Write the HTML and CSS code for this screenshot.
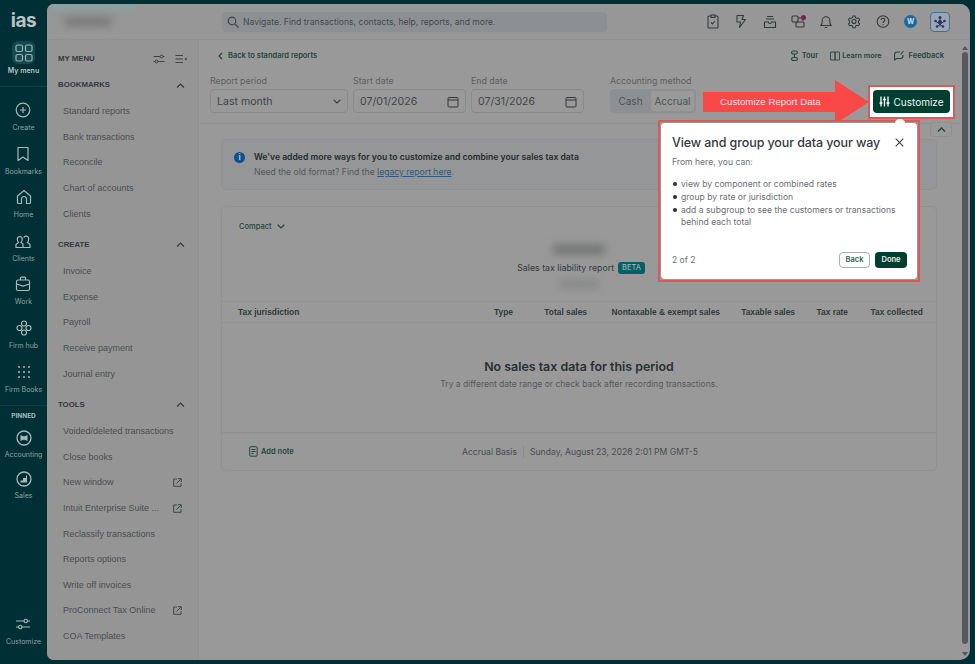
FILE: index.html
```html
<!DOCTYPE html>
<html lang="en">
<head>
    <meta charset="UTF-8">
    <meta name="viewport" content="width=device-width, initial-scale=1.0">
    <title>Sales tax liability report</title>
    <link rel="stylesheet" href="styles.css">
</head>
<body>
<div class="app">
    <nav class="rail">
        <div class="logo">ias</div>
        <div class="rail-top">
            <div class="tile"><svg width="18" height="18" viewBox="0 0 18 18" fill="none" stroke="#9fb0b1" stroke-width="1.2"><rect x="1" y="1" width="6.5" height="6.5" rx="1.5"/><rect x="10.5" y="1" width="6.5" height="6.5" rx="1.5"/><rect x="1" y="10.5" width="6.5" height="6.5" rx="1.5"/><rect x="10.5" y="10.5" width="6.5" height="6.5" rx="1.5"/></svg></div>
            <div class="rail-label strong">My menu</div>
        </div>
        <div class="rail-item"><svg width="16" height="16" viewBox="0 0 16 16" fill="none" stroke="#a9b8b9" stroke-width="1.2"><circle cx="8" cy="8" r="6.8"/><path d="M8 5v6M5 8h6"/></svg><span class="rail-label">Create</span></div>
        <div class="rail-item"><svg width="16" height="16" viewBox="0 0 16 16" fill="none" stroke="#a9b8b9" stroke-width="1.2"><path d="M3 1.500h10v13l-5-3.500-5 3.500z" stroke-linejoin="round"/></svg><span class="rail-label">Bookmarks</span></div>
        <div class="rail-item"><svg width="16" height="16" viewBox="0 0 16 16" fill="none" stroke="#a9b8b9" stroke-width="1.2"><path d="M1.500 7 8 1.500 14.500 7v6.500a1 1 0 0 1-1 1h-3V10a2.500 2.500 0 0 0-5 0v4.500h-3a1 1 0 0 1-1-1z" stroke-linejoin="round"/></svg><span class="rail-label">Home</span></div>
        <div class="rail-item"><svg width="16" height="16" viewBox="0 0 16 16" fill="none" stroke="#a9b8b9" stroke-width="1.2"><path d="M1 14.500v-3l2.500-2c-1-1-1.200-2-1.200-4a2.600 2.600 0 0 1 5 0c0 2-.2 3-1.300 4L8 11v3.500zM8 14.500h7v-3l-2.500-2c1-1 1.200-2 1.200-4a2.600 2.600 0 0 0-4.900-1"/></svg><span class="rail-label">Clients</span></div>
        <div class="rail-item"><svg width="16" height="16" viewBox="0 0 16 16" fill="none" stroke="#a9b8b9" stroke-width="1.2"><rect x="1.500" y="4" width="13" height="10.500" rx="1.500"/><path d="M5.500 4V2a.8.8 0 0 1 .8-.8h3.400a.8.8 0 0 1 .8.8v2M1.500 8 8 10l6.500-2"/></svg><span class="rail-label">Work</span></div>
        <div class="rail-item"><svg width="16" height="16" viewBox="0 0 16 16" fill="none" stroke="#a9b8b9" stroke-width="1.2"><circle cx="8" cy="3.500" r="2.500"/><circle cx="8" cy="12.500" r="2.500"/><circle cx="3.500" cy="8" r="2.500"/><circle cx="12.500" cy="8" r="2.500"/></svg><span class="rail-label">Firm hub</span></div>
        <div class="rail-item"><svg width="16" height="16" viewBox="0 0 16 16" fill="#a9b8b9"><circle cx="3" cy="3" r="1"/><circle cx="8" cy="3" r="1"/><circle cx="13" cy="3" r="1"/><circle cx="3" cy="8" r="1"/><circle cx="8" cy="8" r="1"/><circle cx="13" cy="8" r="1"/><circle cx="3" cy="13" r="1"/><circle cx="8" cy="13" r="1"/><circle cx="13" cy="13" r="1"/></svg><span class="rail-label">Firm Books</span></div>
        <div class="pinned">PINNED</div>
        <div class="rail-item pin"><svg width="16" height="16" viewBox="0 0 16 16"><circle cx="8" cy="8" r="7" fill="none" stroke="#a9b8b9" stroke-width="1.300"/><path d="M4.500 5 8 6.500 11.500 5v6L8 9.500 4.500 11z" fill="#a9b8b9"/></svg><span class="rail-label">Accounting</span></div>
        <div class="rail-item pin"><svg width="16" height="16" viewBox="0 0 16 16"><circle cx="8" cy="8" r="7" fill="none" stroke="#a9b8b9" stroke-width="1.300"/><path d="M4.500 11.500v-2h2.500V7h3V4.500h1v7z" fill="#a9b8b9"/></svg><span class="rail-label">Sales</span></div>
        <div class="rail-item rail-bottom"><svg width="16" height="16" viewBox="0 0 16 16" fill="none" stroke="#a9b8b9" stroke-width="1.100"><path d="M1 5h8M12.500 5H15M1 11h2.500M7 11h8"/><circle cx="10.700" cy="5" r="1.700"/><circle cx="5.200" cy="11" r="1.700"/></svg><span class="rail-label">Customize</span></div>
    </nav>

    <div class="main">
        <header class="topbar">
            <div class="company-tab"></div>
            <div class="company"></div>
            <div class="search">
                <svg width="12" height="12" viewBox="0 0 12 12" fill="none" stroke="#3f4547" stroke-width="1.200"><circle cx="5" cy="5" r="3.800"/><path d="m8 8 3.500 3.500"/></svg>
                <span>Navigate. Find transactions, contacts, help, reports, and more.</span>
            </div>
            <div class="top-icons">
                <svg width="14" height="15" viewBox="0 0 14 15" fill="none" stroke="#33393b" stroke-width="1.100"><rect x="2" y="2" width="10" height="12" rx="1"/><rect x="5" y="1" width="4" height="2.400" fill="#999"/><path d="m5 8.500 1.500 1.500L9 7"/></svg>
                <svg width="14" height="15" viewBox="0 0 14 15" fill="none" stroke="#33393b" stroke-width="1.100"><path d="M3 1.500h6.500L8 5.500h3.500L5.500 13.500l1-5.500H3z" stroke-linejoin="round"/></svg>
                <svg width="14" height="15" viewBox="0 0 14 15" fill="none" stroke="#33393b" stroke-width="1.100"><path d="M1.500 8v5.500h11V8h-4a1.500 1.500 0 0 1-3 0zM3 5h8M4 2.500h6"/></svg>
                <span class="msg-icon"><svg width="14" height="15" viewBox="0 0 14 15" fill="none" stroke="#33393b" stroke-width="1.100"><rect x="1" y="2" width="6" height="6" rx="1"/><rect x="5" y="8" width="8" height="5" rx="1"/><path d="M7 4h5v3"/></svg><i class="msg-dot"></i></span>
                <svg width="14" height="15" viewBox="0 0 14 15" fill="none" stroke="#33393b" stroke-width="1.100"><path d="M2 11.500c1-1 1.200-2 1.200-5a3.800 3.800 0 0 1 7.600 0c0 3 .2 4 1.200 5zM5.800 13.500h2.400"/></svg>
                <svg width="14" height="15" viewBox="0 0 14 15" fill="none" stroke="#33393b" stroke-width="1.100"><circle cx="7" cy="7.500" r="2"/><path d="m5.800 1.500h2.400l.4 1.800 1.600.9 1.800-.5 1.100 2-1.300 1.300v1.800l1.300 1.300-1.100 2-1.800-.5-1.600.9-.4 1.800H5.800l-.4-1.800-1.600-.9-1.800.5-1.100-2 1.300-1.300V7l-1.300-1.300 1.100-2 1.800.5 1.600-.9z" transform="translate(.6 .6) scale(.92)"/></svg>
                <svg width="14" height="15" viewBox="0 0 14 15" fill="none" stroke="#33393b" stroke-width="1.100"><circle cx="7" cy="7.500" r="5.800"/><path d="M5.200 6a1.800 1.800 0 1 1 2.800 1.500c-.7.400-1 .8-1 1.500M7 10.300v.9"/></svg>
                <span class="avatar">W</span>
                <span class="assist"><svg width="14" height="14" viewBox="0 0 14 14" fill="#27356f"><circle cx="7" cy="2.500" r="1.500"/><circle cx="2.500" cy="6" r="1.300"/><circle cx="11.500" cy="6" r="1.300"/><circle cx="4" cy="11.500" r="1.300"/><circle cx="10" cy="11.500" r="1.300"/><circle cx="7" cy="7" r="2"/><path d="M7 2.500v9M2.500 6 10 11.500M11.500 6 4 11.500" stroke="#27356f"/></svg></span>
            </div>
        </header>

        <div class="body">
            <aside class="menu">
                <div class="menu-head">
                    <span>MY MENU</span>
                    <span class="menu-tools">
                        <svg width="12" height="12" viewBox="0 0 12 12" fill="none" stroke="#33393b" stroke-width=".9"><path d="M.5 3.500h6.500M10 3.500h1.500M.5 8.500H2M5 8.500h6.500"/><circle cx="8.500" cy="3.500" r="1.400"/><circle cx="3.500" cy="8.500" r="1.400"/></svg>
                        <svg width="12" height="12" viewBox="0 0 12 12" fill="none" stroke="#33393b" stroke-width=".9"><path d="M.5 2.500h7.500M.5 6h7.500M.5 9.500h7.500"/><path d="M11.500 4.500 9.500 6l2 1.500z" fill="#33393b" stroke="none"/></svg>
                    </span>
                </div>
                <div class="menu-section">BOOKMARKS <svg width="9" height="5" viewBox="0 0 9 5" fill="none" stroke="#33393b" stroke-width="1.200"><path d="m1 4.500 3.500-3.500 3.500 3.500"/></svg></div>
                <a class="menu-item">Standard reports</a>
                <a class="menu-item">Bank transactions</a>
                <a class="menu-item">Reconcile</a>
                <a class="menu-item">Chart of accounts</a>
                <a class="menu-item">Clients</a>
                <div class="menu-section">CREATE <svg width="9" height="5" viewBox="0 0 9 5" fill="none" stroke="#33393b" stroke-width="1.200"><path d="m1 4.500 3.500-3.500 3.500 3.500"/></svg></div>
                <a class="menu-item">Invoice</a>
                <a class="menu-item">Expense</a>
                <a class="menu-item">Payroll</a>
                <a class="menu-item">Receive payment</a>
                <a class="menu-item">Journal entry</a>
                <div class="menu-section">TOOLS <svg width="9" height="5" viewBox="0 0 9 5" fill="none" stroke="#33393b" stroke-width="1.200"><path d="m1 4.500 3.500-3.500 3.500 3.500"/></svg></div>
                <a class="menu-item">Voided/deleted transactions</a>
                <a class="menu-item">Close books</a>
                <a class="menu-item">New window <svg class="ext" width="9" height="9" viewBox="0 0 9 9" fill="none" stroke="#3f4547"><path d="M4 1H.7v7.300H8V5M3.500 5.500 8 1M5 .7h3.300V4"/></svg></a>
                <a class="menu-item">Intuit Enterprise Suite ... <svg class="ext" width="9" height="9" viewBox="0 0 9 9" fill="none" stroke="#3f4547"><path d="M4 1H.7v7.300H8V5M3.500 5.500 8 1M5 .7h3.300V4"/></svg></a>
                <a class="menu-item">Reclassify transactions</a>
                <a class="menu-item">Reports options</a>
                <a class="menu-item">Write off invoices</a>
                <a class="menu-item">ProConnect Tax Online <svg class="ext" width="9" height="9" viewBox="0 0 9 9" fill="none" stroke="#3f4547"><path d="M4 1H.7v7.300H8V5M3.500 5.500 8 1M5 .7h3.300V4"/></svg></a>
                <a class="menu-item">COA Templates</a>
            </aside>

            <main class="content">
                <div class="report-head">
                    <div class="links">
                        <a class="back"><svg width="5" height="8" viewBox="0 0 5 8" fill="none" stroke="#24453f" stroke-width="1.200"><path d="M4 1 1 4l3 3"/></svg> Back to standard reports</a>
                        <div class="link-right">
                            <a class="tour"><svg width="7" height="12" viewBox="0 0 7 12" fill="none" stroke="#24453f" stroke-width="1.100"><rect x=".6" y="1" width="5.800" height="3" rx="1.500"/><rect x=".6" y="7.500" width="5.800" height="3" rx="1.500"/><path d="M3.500 4v3.500"/></svg> Tour</a>
                            <a class="learn"><svg width="10" height="10" viewBox="0 0 10 10" fill="none" stroke="#24453f" stroke-width=".9"><path d="M.5 1h4.500v8H.5zM5 1h4.500v8H5z"/></svg> Learn more</a>
                            <a><svg width="10" height="11" viewBox="0 0 10 11" fill="none" stroke="#24453f" stroke-width="1.100"><path d="M6 2H3A2.500 2.500 0 0 0 .6 4.500V10l2-1.500h4A2.500 2.500 0 0 0 9 6V5M6.500 4.500l3-3.500"/></svg> Feedback</a>
                        </div>
                    </div>
                    <div class="filters">
                        <label class="field period">Report period
                            <span class="control">Last month <svg width="8" height="5" viewBox="0 0 8 5" fill="none" stroke="#33393b" stroke-width="1.100"><path d="m.7.800 3.300 3.200L7.300.8"/></svg></span>
                        </label>
                        <label class="field date">Start date
                            <span class="control">07/01/2026 <svg width="12" height="12" viewBox="0 0 12 12" fill="none" stroke="#33393b"><rect x="1" y="1.500" width="10" height="9.500" rx="1"/><path d="M1 4h10"/></svg></span>
                        </label>
                        <label class="field date">End date
                            <span class="control">07/31/2026 <svg width="12" height="12" viewBox="0 0 12 12" fill="none" stroke="#33393b"><rect x="1" y="1.500" width="10" height="9.500" rx="1"/><path d="M1 4h10"/></svg></span>
                        </label>
                        <div class="field method">Accounting method
                            <span class="segment"><span class="seg">Cash</span><span class="seg on">Accrual</span></span>
                        </div>
                    </div>
                </div>

                <div class="report-body">
                    <section class="alert">
                        <span class="info">i</span>
                        <div>
                            <p class="alert-title">We've added more ways for you to customize and combine your sales tax data</p>
                            <p class="alert-text">Need the old format? Find the <a class="legacy">legacy report here</a>.</p>
                        </div>
                    </section>

                    <section class="card">
                        <div class="compact">Compact <svg width="8" height="5" viewBox="0 0 8 5" fill="none" stroke="#24453f" stroke-width="1.200"><path d="m.7.800 3.300 3.200L7.300.8"/></svg></div>
                        <div class="report-title">
                            <div class="blur-name"></div>
                            <div class="title-line">Sales tax liability report <span class="beta">BETA</span></div>
                            <div class="blur-date"></div>
                        </div>
                        <div class="table-head">
                            <span>Tax jurisdiction</span>
                            <span>Type</span>
                            <span>Total sales</span>
                            <span>Nontaxable &amp; exempt sales</span>
                            <span>Taxable sales</span>
                            <span>Tax rate</span>
                            <span>Tax collected</span>
                        </div>
                        <div class="empty">
                            <h2>No sales tax data for this period</h2>
                            <p>Try a different date range or check back after recording transactions.</p>
                        </div>
                        <footer class="card-foot">
                            <a class="note"><svg width="9" height="11" viewBox="0 0 9 11" fill="none" stroke="#24453f"><rect x=".7" y=".7" width="7.500" height="9.500" rx="1"/><path d="M2.500 3.500h4M2.500 5.500h4M2.500 7.500h2"/></svg> Add note</a>
                            <span class="foot-text"><span class="basis">Accrual Basis</span><span>Sunday, August 23, 2026 2:01 PM GMT-5</span></span>
                        </footer>
                    </section>
                </div>
            </main>

            <div class="scrollbar">
                <i class="arrow-up"></i>
                <div class="thumb"></div>
                <i class="arrow-down"></i>
            </div>
        </div>
    </div>
</div>

<!-- things laid over the dimmed page -->
<button class="collapse"><svg width="9" height="5" viewBox="0 0 9 5" fill="none" stroke="#24453f" stroke-width="1.300"><path d="m1 4.500 3.500-3.500 3.500 3.500"/></svg></button>
<div class="callout">
    <svg width="166" height="44" viewBox="0 0 166 44"><path d="M0 12h132V0l34 22-34 22V32H0z" fill="#f94848"/></svg>
    <span>Customize Report Data</span>
</div>
<div class="customize-frame">
    <button class="customize"><svg width="11" height="11" viewBox="0 0 11 11" fill="none" stroke="#fff" stroke-width="1.300"><path d="M2 .5v10M5.500.5v10M9 .5v10"/><path d="M.5 7h3M4 3.500h3M7.500 7h3"/></svg> Customize</button>
</div>
<div class="popover-frame">
    <div class="popover">
        <div class="pop-head">
            <h3>View and group your data your way</h3>
            <svg width="9" height="9" viewBox="0 0 9 9" fill="none" stroke="#3b4143" stroke-width="1.100"><path d="m.7.700 7.600 7.600M8.300.7.700 8.300"/></svg>
        </div>
        <p class="pop-intro">From here, you can:</p>
        <ul class="pop-list">
            <li>view by component or combined rates</li>
            <li>group by rate or jurisdiction</li>
            <li>add a subgroup to see the customers or transactions behind each total</li>
        </ul>
        <div class="pop-foot">
            <span>2 of 2</span>
            <span class="pop-btns"><button class="btn-back">Back</button><button class="btn-done">Done</button></span>
        </div>
    </div>
</div>
</body>
</html>
```

FILE: styles.css
```css
* {
    box-sizing: border-box;
}
html, body {
    margin: 0;
    height: 100%;
    overflow: hidden;
}
body {
    background-color: #012f36;
    color: #3b4143;
    font-family: "Open Sans", sans-serif;
    position: relative;
}
p, h2, h3, ul {
    margin: 0;
}
button {
    font-family: inherit;
    cursor: pointer;
}
svg {
    display: block;
    flex: none;
}
.app {
    display: flex;
    height: 664px;
    padding: 4px 5px 4px 0;
}

/* left rail */
.rail {
    width: 47px;
    flex: none;
    display: flex;
    flex-direction: column;
    align-items: center;
    margin-top: -4px;
    margin-bottom: -4px;
    padding-bottom: 18px;
    color: #a9b8b9;
}
.logo {
    margin-top: 9px;
    height: 23px;
    font: bold 19px/23px "Inter", sans-serif;
    letter-spacing: -.5px;
    color: #b8c4c5;
}
.rail-top {
    margin-top: 9px;
    margin-bottom: 9px;
    width: 100%;
    height: 46px;
    border-bottom: 1px solid #0d3e44;
    display: flex;
    flex-direction: column;
    align-items: center;
    flex: none;
}
.tile {
    width: 23px;
    height: 23px;
    border-radius: 6px;
    background-color: #124a50;
    display: flex;
    align-items: center;
    justify-content: center;
}
.rail-label {
    font: 7px/10px "Inter", sans-serif;
    white-space: nowrap;
    color: #8fa2a3;
}
.rail-label.strong {
    margin-top: 2px;
    font-weight: 600;
    color: #b8c4c5;
}
.rail-item {
    height: 43.600px;
    padding-top: 6px;
    display: flex;
    flex-direction: column;
    align-items: center;
    gap: 5px;
    flex: none;
}
.rail-item.pin {
    height: 41px;
    padding-top: 3px;
    gap: 4px;
}
.rail-item.rail-bottom {
    margin-top: auto;
    height: 30px;
    padding-top: 0;
}
.pinned {
    width: 100%;
    margin-top: 4px;
    padding-top: 4.500px;
    border-top: 1px solid #0d3e44;
    text-align: center;
    font: bold 6.500px/11px "Inter", sans-serif;
    color: #a9b8b9;
    height: 22px;
    flex: none;
}

/* page area */
.main {
    flex: 1;
    min-width: 0;
    display: flex;
    flex-direction: column;
    background-color: #999;
    border-radius: 7px 10px 10px 7px;
    overflow: hidden;
}
.topbar {
    height: 36px;
    flex: none;
    display: flex;
    align-items: center;
    border-bottom: 1px solid #8f9191;
    background-color: #979797;
    position: relative;
}
.company-tab {
    position: absolute;
    left: 3px;
    top: -2px;
    width: 86px;
    height: 9px;
    background-color: #8ea09f;
    filter: blur(2px);
}
.company {
    width: 46px;
    height: 9px;
    margin-left: 18px;
    background-color: #777;
    filter: blur(4px);
}
.search {
    margin-left: 111px;
    width: 385px;
    height: 20px;
    display: flex;
    align-items: center;
    gap: 4px;
    padding-left: 5px;
    background-color: #8d9092;
    border-radius: 4px;
    font: 8.600px "Inter", sans-serif;
    color: #44494b;
}
.top-icons {
    display: flex;
    align-items: center;
    gap: 14.300px;
    margin-left: 99px;
}
.msg-icon {
    position: relative;
}
.msg-dot {
    position: absolute;
    top: 1px;
    right: -1px;
    width: 5px;
    height: 5px;
    border-radius: 50%;
    background-color: #7d1f5a;
}
.avatar {
    width: 13px;
    height: 13px;
    border-radius: 50%;
    background-color: #1a6a9f;
    color: #d5dde2;
    font: bold 7px/13px "Inter", sans-serif;
    text-align: center;
}
.assist {
    width: 20px;
    height: 20px;
    margin-left: -1px;
    border: 1px solid #3f6f9a;
    border-radius: 4px;
    background-color: #a0a6b0;
    display: flex;
    align-items: center;
    justify-content: center;
}
.body {
    flex: 1;
    min-height: 0;
    display: flex;
}

/* my menu column */
.menu {
    width: 152px;
    flex: none;
    background-color: #959595;
    border-right: 1px solid #8f9191;
    padding: 0 12px 0 11px;
    font-family: "Liberation Sans", sans-serif;
}
.menu-head {
    height: 39px;
    padding-bottom: 2px;
    display: flex;
    align-items: center;
    justify-content: space-between;
    font: bold 7.800px "Liberation Sans", sans-serif;
    color: #33393b;
}
.menu-tools {
    display: flex;
    gap: 10px;
    margin-right: -1px;
}
.menu-section {
    display: flex;
    justify-content: space-between;
    align-items: center;
    height: 12px;
    font: bold 7.800px/12px "Liberation Sans", sans-serif;
    color: #33393b;
    padding-right: 1px;
    margin: 0 0 7.500px;
}
.menu-item + .menu-section {
    margin-top: 12.500px;
}
.menu-item {
    height: 25.600px;
    padding-left: 5px;
    display: flex;
    align-items: center;
    justify-content: space-between;
    font-size: 9px;
    color: #4a4e50;
    white-space: nowrap;
}
.ext {
    margin-right: 4px;
}

/* report */
.content {
    flex: 1;
    min-width: 0;
    display: flex;
    flex-direction: column;
}
.report-head {
    height: 84px;
    flex: none;
    padding: 0 12px 0 11px;
    border-bottom: 1px solid #8f9191;
}
.links {
    height: 31px;
    margin-bottom: 4px;
    display: flex;
    align-items: center;
    justify-content: space-between;
    padding-left: 8px;
    font: 600 7.500px "Inter", sans-serif;
    color: #24453f;
}
.links a {
    display: flex;
    align-items: center;
    gap: 5px;
}
.links a.learn {
    gap: 2px;
    font-size: 7.200px;
}
.links a.tour {
    gap: 4px;
}
.link-right {
    display: flex;
    gap: 12px;
    margin-right: 4px;
}
.filters {
    display: flex;
    align-items: flex-start;
    gap: 5px;
}
.field {
    display: flex;
    flex-direction: column;
    gap: 2px;
    font: 8.800px/12px "Inter", sans-serif;
    color: #5b6062;
}
.field.period {
    width: 138px;
}
.field.date {
    width: 113px;
}
.field.method {
    margin-left: 21px;
}
.control {
    height: 24px;
    border: 1px solid #888b8c;
    border-radius: 4px;
    display: flex;
    align-items: center;
    justify-content: space-between;
    padding: 1px 6px 0;
    font-size: 10.600px;
    color: #3f4547;
    white-space: nowrap;
}
.segment {
    display: flex;
    height: 24px;
    width: 86px;
    border-radius: 4px;
    background-color: #8d9092;
    padding: 1px;
    font-size: 10px;
    white-space: nowrap;
}
.seg {
    display: flex;
    align-items: center;
    justify-content: center;
    flex: 1;
    color: #4f5355;
}
.seg.on {
    flex: none;
    width: 45px;
    background-color: #999;
    border: 1px solid #8f9191;
    border-radius: 3px;
}
.report-body {
    flex: 1;
    padding: 15px 23px 0 22px;
}
.alert {
    height: 51px;
    border: 1px solid #8f9191;
    border-radius: 5px;
    background-color: #949697;
    display: flex;
    align-items: flex-start;
    gap: 9px;
    padding: 10px 12px;
    font: 8.600px/15px "Inter", sans-serif;
}
.info {
    width: 11px;
    height: 11px;
    margin-top: 2px;
    flex: none;
    border-radius: 50%;
    background-color: #134f8d;
    color: #b9c4d2;
    font: bold 8px/11px "Inter", sans-serif;
    text-align: center;
}
.alert-title {
    font-weight: 600;
    color: #262b2d;
}
.alert-text {
    color: #55595b;
}
.legacy {
    color: #2c5a80;
    text-decoration: underline;
}
.card {
    margin-top: 16px;
    height: 265px;
    border: 1px solid #909292;
    border-radius: 5px;
    display: flex;
    flex-direction: column;
}
.compact {
    height: 38px;
    flex: none;
    padding-left: 17px;
    display: flex;
    align-items: center;
    gap: 5px;
    font: 500 7.500px "Inter", sans-serif;
    color: #24453f;
}
.report-title {
    height: 56px;
    flex: none;
    display: flex;
    flex-direction: column;
    align-items: center;
}
.blur-name {
    width: 52px;
    height: 9px;
    background-color: #6f7171;
    filter: blur(4px);
}
.title-line {
    margin-top: 7px;
    display: flex;
    align-items: center;
    gap: 4px;
    font: 8.800px/14px "Inter", sans-serif;
    color: #33393b;
    padding-left: 4px;
    height: 14px;
}
.beta {
    background-color: #045f66;
    color: #a9c2c4;
    border-radius: 3px;
    font: 7.500px/12px "Inter", sans-serif;
    padding: 0 4px;
}
.blur-date {
    width: 40px;
    height: 8px;
    margin-top: 5px;
    background-color: #858787;
    filter: blur(4px);
}
.table-head {
    height: 22px;
    flex: none;
    display: grid;
    grid-template-columns: 1fr 40px 74px 133px 75px 53px 75px;
    align-items: center;
    padding: 0 13px 0 16px;
    border-top: 1px solid #8f9191;
    border-bottom: 1px solid #8f9191;
    font: bold 8.400px "Liberation Sans", sans-serif;
    color: #33393b;
    text-align: right;
    white-space: nowrap;
}
.table-head span:first-child {
    text-align: left;
}
.empty {
    height: 110px;
    flex: none;
    padding-top: 35px;
    border-bottom: 1px solid #8f9191;
    text-align: center;
}
.empty h2 {
    font: 600 12.400px/18px "Inter", sans-serif;
    color: #2a2f31;
}
.empty p {
    margin-top: 2px;
    font: 8.500px/12px "Inter", sans-serif;
    color: #55595b;
}
.card-foot {
    flex: 1;
    display: flex;
    align-items: center;
    padding-left: 27px;
}
.note {
    display: flex;
    align-items: center;
    gap: 3px;
    width: 213px;
    font: 600 7.500px "Inter", sans-serif;
    color: #24453f;
}
.foot-text {
    display: flex;
    font: 8.600px/12px "Inter", sans-serif;
    color: #484c4e;
    white-space: nowrap;
}
.basis {
    padding-right: 6px;
    margin-right: 6px;
    border-right: 1px solid #888b8c;
}
.scrollbar {
    width: 10px;
    flex: none;
    display: flex;
    flex-direction: column;
    align-items: center;
    padding: 6px 0 4px;
}
.thumb {
    flex: 1;
    width: 6px;
    margin: 2px 0 8px;
    border-radius: 3px;
    background-color: #575858;
}
.arrow-up {
    border: 3px solid transparent;
    border-top: 0;
    border-bottom: 4px solid #555;
}
.arrow-down {
    border: 3px solid transparent;
    border-bottom: 0;
    border-top: 4px solid #555;
}

/* overlays */
.collapse {
    position: absolute;
    left: 930px;
    top: 122px;
    width: 22px;
    height: 15px;
    border: 1px solid #8f9191;
    border-radius: 3px;
    background-color: #999;
    display: flex;
    align-items: center;
    justify-content: center;
    padding: 0;
}
.callout {
    position: absolute;
    left: 703px;
    top: 80px;
    width: 166px;
    height: 44px;
}
.callout span {
    position: absolute;
    left: 17px;
    top: 14px;
    font: 9.700px/15px "Liberation Sans", sans-serif;
    color: #fde;
    white-space: nowrap;
}
.customize-frame {
    position: absolute;
    left: 868px;
    top: 85px;
    width: 87px;
    height: 34px;
    border: 2px solid #d9595c;
    background-color: #fff;
    padding: 3px 3px 4px;
}
.customize {
    width: 100%;
    height: 100%;
    border: 0;
    border-radius: 4px;
    background-color: #003f30;
    color: #f1f5f4;
    font: 400 10px "Inter", sans-serif;
    display: flex;
    align-items: center;
    justify-content: center;
    gap: 3px;
}
.popover-frame {
    position: absolute;
    left: 658px;
    top: 120px;
    width: 262px;
    height: 162px;
    border: 2px solid #d9595c;
    padding: 1px;
    background-color: #9a9a9a;
}
.popover-frame::before {
    content: "";
    position: absolute;
    right: 13px;
    top: -3px;
    width: 10px;
    height: 8px;
    background-color: #fff;
    border-radius: 50%;
}
.popover {
    height: 100%;
    background-color: #fff;
    border-radius: 4px;
    padding: 11px 10px 0 11px;
    display: flex;
    flex-direction: column;
    position: relative;
    font-family: "Inter", sans-serif;
}
.pop-head {
    display: flex;
    align-items: center;
    justify-content: space-between;
    padding-right: 3px;
}
.pop-head h3 {
    font: 500 12.500px/17px "Inter", sans-serif;
    color: #33393b;
    letter-spacing: -.1px;
    white-space: nowrap;
}
.pop-intro {
    margin-top: 5px;
    font-size: 8.600px;
    line-height: 12px;
    color: #6b7072;
}
.pop-list {
    margin-top: 10px;
    padding-left: 9px;
    list-style: none;
    font-size: 8.600px;
    line-height: 12px;
    color: #6b7072;
}
.pop-list li {
    margin-bottom: 1px;
    position: relative;
}
.pop-list li::before {
    content: "";
    position: absolute;
    left: -8.500px;
    top: 4px;
    width: 4px;
    height: 4px;
    border-radius: 50%;
    background-color: #2a2f31;
}
.pop-foot {
    margin-top: auto;
    height: 34px;
    padding-bottom: 5px;
    display: flex;
    align-items: center;
    justify-content: space-between;
    font-size: 8.500px;
    color: #6b7072;
}
.pop-btns {
    display: flex;
    gap: 5px;
}
.btn-back, .btn-done {
    height: 16px;
    width: 32px;
    border-radius: 4px;
    font: 600 7.500px "Inter", sans-serif;
    padding: 0;
}
.btn-back {
    width: 31px;
    background-color: #fff;
    border: 1px solid #9db5ae;
    color: #2f5f53;
}
.btn-done {
    background-color: #003f30;
    border: 0;
    color: #e8efed;
}
```
